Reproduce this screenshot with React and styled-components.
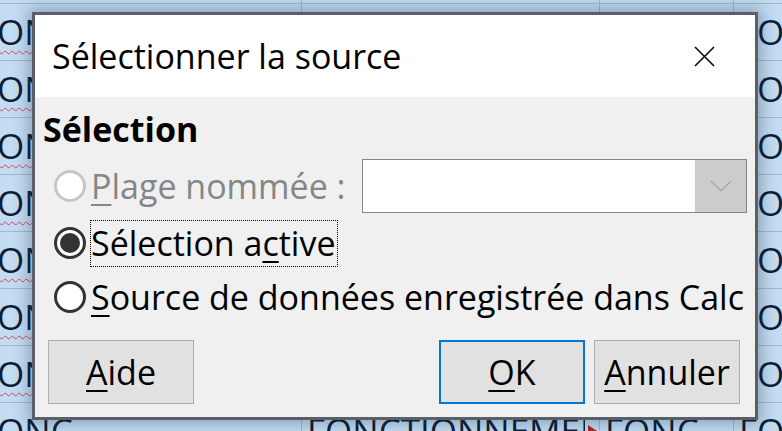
import styled, { createGlobalStyle } from "styled-components";

const GlobalStyle = createGlobalStyle`
  html, body {
    margin: 0;
    padding: 0;
  }
  body {
    width: 782px;
    height: 431px;
    overflow: hidden;
    background: #c3dcf2;
    font-family: "Open Sans", "Noto Sans", sans-serif;
  }
`;

const Page = styled.div`
  position: relative;
  width: 782px;
  height: 431px;
  overflow: hidden;
`;

/* spreadsheet behind the dialog */
const Sheet = styled.div`
  display: grid;
  grid-template-columns: 328px 298px 134px 220px;
  grid-auto-rows: 57px;
  margin-left: -26px;
  margin-top: -53.5px;
`;

const Cell = styled.div`
  position: relative;
  display: flex;
  align-items: center;
  box-sizing: border-box;
  padding: 0 ${(p) => (p.$clip ? 14 : 0)}px 0 5px;
  overflow: hidden;
  white-space: nowrap;
  background: #c3dcf2;
  border-right: 1px solid #9db8cf;
  border-bottom: 1px solid #9db8cf;
  color: #0b1e36;
  font-size: 35px;
`;

const CellText = styled.span`
  overflow: hidden;
  text-decoration: ${(p) => (p.$wavy ? "underline wavy #d2455f" : "none")};
  text-decoration-thickness: 1px;
  text-underline-offset: 5px;
`;

const Overflow = styled.span`
  position: absolute;
  right: 2px;
  top: 50%;
  margin-top: -6px;
  width: 0;
  height: 0;
  border-top: 6px solid transparent;
  border-bottom: 6px solid transparent;
  border-left: 9px solid #b3202f;
`;

/* dialog */
const Dialog = styled.div`
  position: absolute;
  left: 32px;
  top: 12px;
  width: 726px;
  height: 408px;
  box-sizing: border-box;
  display: flex;
  flex-direction: column;
  border: 3px solid #596067;
  background: #f0f0f0;
  box-shadow: 0 0 14px 4px rgba(30, 50, 70, 0.32);
  color: #000;
  font-size: 34px;
`;

const TitleBar = styled.div`
  display: flex;
  align-items: center;
  height: 82px;
  flex-shrink: 0;
  padding: 0 40px 0 17px;
  background: #fff;
`;

const Title = styled.div`
  flex: 1;
  line-height: 46px;
`;

const Body = styled.div`
  flex: 1;
  min-width: 0;
  display: flex;
  flex-direction: column;
  padding: 9px 8px 13px 8px;
`;

const Heading = styled.div`
  font-weight: 700;
  line-height: 46px;
  margin-bottom: 7px;
`;

const Options = styled.div`
  display: flex;
  flex-direction: column;
  padding-left: 11px;
`;

const Row = styled.div`
  display: flex;
  align-items: center;
  height: 54px;
  margin-top: ${(p) => p.$gap || 0}px;
`;

const Radio = styled.span`
  position: relative;
  flex-shrink: 0;
  width: 32px;
  height: 32px;
  box-sizing: border-box;
  border-radius: 50%;
  border: 3px solid ${(p) => (p.$disabled ? "#c6c6c6" : "#333")};
  background: #fff;

  &::after {
    content: "";
    display: ${(p) => (p.$checked ? "block" : "none")};
    position: absolute;
    left: 3px;
    top: 3px;
    width: 20px;
    height: 20px;
    border-radius: 50%;
    background: #333;
  }
`;

const Label = styled.span`
  display: block;
  flex: 0 1 auto;
  min-width: 0;
  height: 45px;
  margin-left: 4px;
  padding-right: 1px;
  border: 1px ${(p) => (p.$focus ? "dotted #000" : "solid transparent")};
  color: ${(p) => (p.$disabled ? "#868686" : "#000")};
  white-space: nowrap;
  line-height: 45px;
`;

const Key = styled.u`
  text-decoration-thickness: 2px;
  text-underline-offset: 5px;
`;

const Combo = styled.div`
  display: flex;
  flex: 0 0 385px;
  height: 54px;
  box-sizing: border-box;
  margin-left: auto;
  border: 1px solid #838383;
  background: #fff;
`;

const DropButton = styled.div`
  display: flex;
  align-items: center;
  justify-content: center;
  width: 51px;
  margin-left: auto;
  background: #cccccc;
`;

const Buttons = styled.div`
  display: flex;
  margin-top: auto;
  padding: 0 7px 0 5px;
  gap: 9px;
`;

const Button = styled.button`
  display: flex;
  align-items: center;
  justify-content: center;
  width: 146px;
  height: 64px;
  box-sizing: border-box;
  margin-left: ${(p) => (p.$push ? "auto" : "0")};
  padding: 0;
  background: #e1e1e1;
  border: ${(p) => (p.$default ? "2px solid #0078d7" : "1px solid #adadad")};
  font-family: inherit;
  font-size: 34px;
  color: #000;
  line-height: 46px;
`;

const cells = ["FONC", "FONCTIONNEMENT", "FONC", "FONCTIONNEMENT"];

export default function App() {
  return (
    <Page>
      <GlobalStyle />
      <Sheet>
        {Array.from({ length: 9 }).flatMap((_, i) =>
          cells.map((text, c) => (
            <Cell key={`${i}-${c}`} $clip={c < 3}>
              <CellText $wavy={c === 0}>{text}</CellText>
              {i === 8 && c === 1 && <Overflow />}
            </Cell>
          ))
        )}
      </Sheet>

      <Dialog>
        <TitleBar>
          <Title>Sélectionner la source</Title>
          <svg width="21" height="21" viewBox="0 0 21 21">
            <path d="M1 1 L20 20 M20 1 L1 20" stroke="#111" strokeWidth="1.7" />
          </svg>
        </TitleBar>
        <Body>
          <Heading>Sélection</Heading>
          <Options>
            <Row>
              <Radio $disabled />
              <Label $disabled>
                <Key>P</Key>lage nommée :
              </Label>
              <Combo>
                <DropButton>
                  <svg width="22" height="12" viewBox="0 0 22 12">
                    <path d="M1 1 L11 11 L21 1" fill="none" stroke="#a3a3a3" strokeWidth="1.2" />
                  </svg>
                </DropButton>
              </Combo>
            </Row>
            <Row $gap={3}>
              <Radio $checked />
              <Label $focus>
                Sélection a<Key>c</Key>tive
              </Label>
            </Row>
            <Row>
              <Radio />
              <Label>
                <Key>S</Key>ource de données enregistrée dans Calc
              </Label>
            </Row>
          </Options>
          <Buttons>
            <Button>
              <span>
                <Key>A</Key>ide
              </span>
            </Button>
            <Button $push $default>
              <span>
                <Key>O</Key>K
              </span>
            </Button>
            <Button>
              <span>
                <Key>A</Key>nnuler
              </span>
            </Button>
          </Buttons>
        </Body>
      </Dialog>
    </Page>
  );
}
